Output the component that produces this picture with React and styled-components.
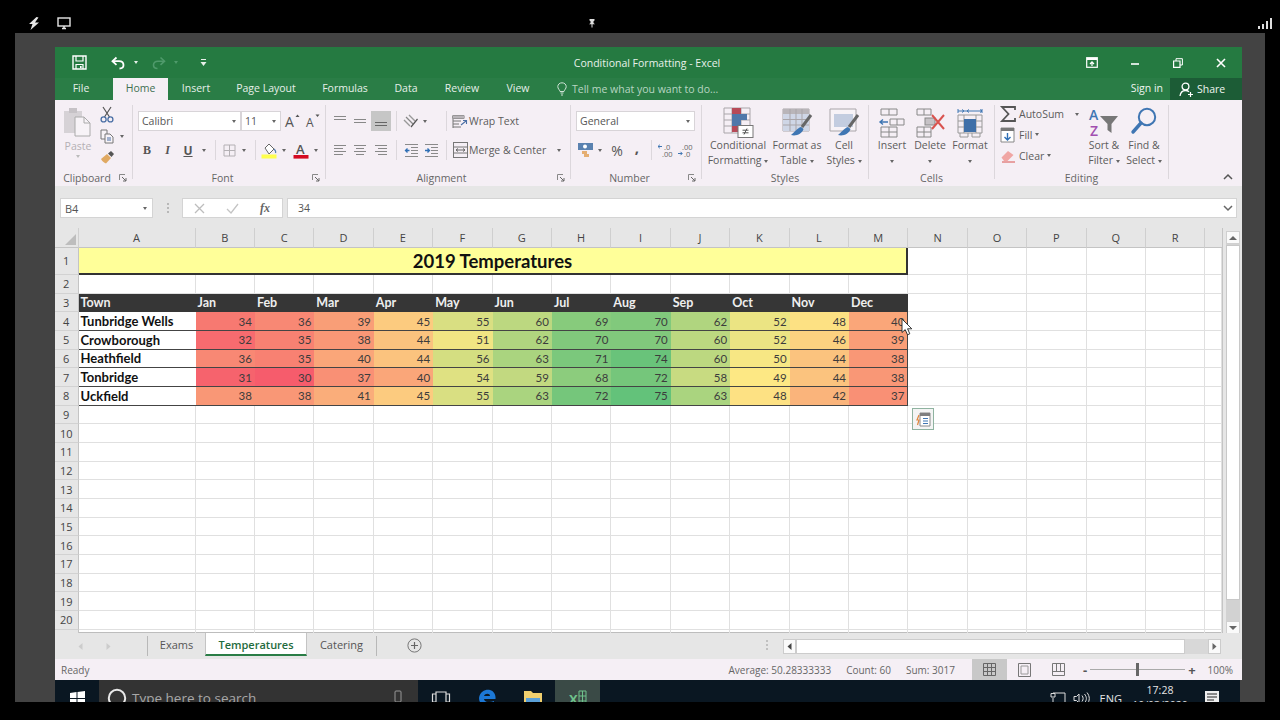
import React from 'react';
import styled, { createGlobalStyle } from 'styled-components';

const GlobalStyle = createGlobalStyle`
  html, body { margin: 0; padding: 0; background: #000; }
  body { font-family: "Open Sans", "Liberation Sans", sans-serif; width: 1280px; height: 720px; overflow: hidden; }
  * { box-sizing: border-box; }
`;

const COLS = 'ABCDEFGHIJKLMNOPQR'.split('');
const MONTHS = ['Jan', 'Feb', 'Mar', 'Apr', 'May', 'Jun', 'Jul', 'Aug', 'Sep', 'Oct', 'Nov', 'Dec'];
const TOWNS = [
  ['Tunbridge Wells', [34, 36, 39, 45, 55, 60, 69, 70, 62, 52, 48, 40]],
  ['Crowborough', [32, 35, 38, 44, 51, 62, 70, 70, 60, 52, 46, 39]],
  ['Heathfield', [36, 35, 40, 44, 56, 63, 71, 74, 60, 50, 44, 38]],
  ['Tonbridge', [31, 30, 37, 40, 54, 59, 68, 72, 58, 49, 44, 38]],
  ['Uckfield', [38, 38, 41, 45, 55, 63, 72, 75, 63, 48, 42, 37]],
];

const mix = (a, b, t) => a.map((v, i) => Math.round(v + (b[i] - v) * t));
const heat = v => {
  const red = [246, 92, 108];
  const yellow = [253, 232, 132];
  const green = [99, 194, 122];
  const c = v < 49 ? mix(red, yellow, (v - 30) / 19) : mix(yellow, green, (v - 49) / 26);
  return `rgb(${c.join(',')})`;
};

const Svg = ({ w, h, children }) => (
  <svg width={w} height={h} viewBox={`0 0 ${w} ${h}`} fill="none" style={{ display: 'block', flex: 'none', overflow: 'visible' }}>
    {children}
  </svg>
);

/* screen chrome */
const BoltIcon = () => <Svg w={12} h={13}><path d="M8.5 0 L1 7 H4.5 L2.5 13 L11 5.5 H7 L10.5 0.5 Z" fill="#e6e6e6" /></Svg>;
const MonitorIcon = () => <Svg w={14} h={13}><rect x="1" y="1" width="12" height="8" stroke="#e6e6e6" strokeWidth="1.4" /><path d="M5 11.5 H9 M7 9 V11.5" stroke="#e6e6e6" strokeWidth="1.6" /></Svg>;
const PinIcon = () => <Svg w={8} h={10}><path d="M1.5 1 H6.5 V2.5 L5.5 3.2 V5 L7 6.2 H1 L2.5 5 V3.2 L1.5 2.5 Z" fill="#ddd" /><path d="M4 6 V9.5" stroke="#ddd" /></Svg>;
const SignalIcon = () => <Svg w={15} h={11}><path d="M1 8 h2 v3 h-2z M5 6 h2 v5 h-2z M9 3 h2 v8 h-2z M13 0 h2 v11 h-2z" fill="#ddd" /></Svg>;

/* title bar */
const SaveIcon = () => <Svg w={15} h={15}><path d="M1 1 H14 V14 H1 Z" stroke="#fff" strokeWidth="1.4" /><path d="M4 1 V6 H11 V1 M4 14 V9.5 H11 V14" stroke="#fff" strokeWidth="1.2" /><rect x="8" y="11" width="1.6" height="2" fill="#fff" /></Svg>;
const UndoIcon = ({ c = '#fff' }) => <Svg w={14} h={14}><path d="M5.5 1.5 L1.5 5.2 L5.5 8.8" stroke={c} strokeWidth="1.8" /><path d="M2 5.2 H8 C11 5.2 12.5 7 12.5 9 C12.5 11 11 12.5 8.5 12.5" stroke={c} strokeWidth="1.8" /></Svg>;
const RedoIcon = () => <Svg w={14} h={14}><path d="M8.5 1.5 L12.5 5.2 L8.5 8.8" stroke="#4f9a6b" strokeWidth="1.6" /><path d="M12 5.2 H6 C3 5.2 1.5 7 1.5 9 C1.5 11 3 12.5 5.5 12.5" stroke="#4f9a6b" strokeWidth="1.6" /></Svg>;
const CustomIcon = () => <Svg w={7} h={9}><path d="M1 1.5 H6" stroke="#e8f0ea" /><path d="M0.5 4 H6.5 L3.5 8 Z" fill="#e8f0ea" /></Svg>;
const DisplayIcon = () => <Svg w={12} h={11}><rect x="0.7" y="0.7" width="10.6" height="9.6" stroke="#fff" strokeWidth="1.2" /><rect x="1" y="1" width="10" height="2" fill="#fff" /><path d="M6 9 V5 M4 7 L6 4.8 L8 7" stroke="#fff" strokeWidth="1.2" /></Svg>;
const MinIcon = () => <Svg w={10} h={10}><path d="M1 6 H9" stroke="#fff" strokeWidth="1.6" /></Svg>;
const RestoreIcon = () => <Svg w={10} h={10}><path d="M0.6 3 H7 V9.4 H0.6 Z" stroke="#fff" strokeWidth="1.2" /><path d="M3 3 V0.7 H9.4 V7 H7" stroke="#fff" /></Svg>;
const CloseIcon = () => <Svg w={10} h={10}><path d="M1 1 L9 9 M9 1 L1 9" stroke="#fff" strokeWidth="1.6" /></Svg>;
const BulbIcon = () => <Svg w={10} h={14}><path d="M3 9.5 C2.5 7.5 0.8 6.8 0.8 4.6 C0.8 2.4 2.6 0.8 5 0.8 C7.4 0.8 9.2 2.4 9.2 4.6 C9.2 6.8 7.5 7.5 7 9.5 Z" stroke="#cfe3d6" /><path d="M3.5 11 H6.5 M4 13 H6" stroke="#cfe3d6" /></Svg>;
const PersonIcon = () => <Svg w={16} h={15}><circle cx="6.5" cy="4.5" r="3.4" stroke="#fff" strokeWidth="1.3" /><path d="M1 14 C1.5 10.5 3.5 8.5 6.5 8.5 C8 8.5 9 9 10 9.8" stroke="#fff" strokeWidth="1.3" /><path d="M11.5 10 V15 M9 12.5 H14" stroke="#fff" strokeWidth="1.2" /></Svg>;

/* clipboard */
const PasteIcon = () => <Svg w={30} h={32}><rect x="1" y="5" width="18" height="22" fill="#d6d2d6" /><rect x="6" y="2" width="8" height="5" fill="#c6c2c6" /><path d="M12 11 H21 L27 17 V30 H12 Z" fill="#f7f3f7" stroke="#aaa" /><path d="M21 11 V17 H27" stroke="#aaa" /></Svg>;
const CutIcon = () => <Svg w={14} h={17}><path d="M3 1 L9.5 11 M11 1 L4.5 11" stroke="#555" strokeWidth="1.2" /><circle cx="3.6" cy="13.4" r="2.5" stroke="#4a6fa5" strokeWidth="1.3" /><circle cx="10.4" cy="13.4" r="2.5" stroke="#4a6fa5" strokeWidth="1.3" /></Svg>;
const CopyIcon = () => <Svg w={14} h={15}><path d="M1 1 H7 V10 H1 Z" stroke="#777" fill="#f7f3f7" /><path d="M5 5 H10 L13 8 V14 H5 Z" stroke="#777" fill="#f7f3f7" /><path d="M7 9 H11 M7 11 H11" stroke="#4a6fa5" /></Svg>;
const BrushIcon = () => <Svg w={15} h={14}><path d="M1 9 L7 4 L11 8 L6 13.5 C4 12.5 2 11 1 9 Z" fill="#e0a962" /><path d="M8 3.5 L11 1 L14 4 L11.5 7 Z" fill="#555" /></Svg>;

/* font */
const FontGrow = ({ small, up }) => (
  <Svg w={16} h={16}>
    <text x={small ? 2 : 1} y="14" fontFamily="Open Sans, sans-serif" fontSize={small ? 12 : 14} fill="#555">A</text>
    <path d={up ? 'M11.5 4 L13.5 1.5 L15.5 4 Z' : 'M11.5 1.5 L13.5 4 L15.5 1.5 Z'} fill="#555" />
  </Svg>
);
const BorderIcon = () => <Svg w={13} h={13}><path d="M1 1 H12 V12 H1 Z M6.5 1 V12 M1 6.5 H12" stroke="#b4b0b4" /></Svg>;
const FillIcon = () => <Svg w={16} h={17}><path d="M4 6 L8 2 L13 7 L8 12 Z" stroke="#666" fill="#fff" /><path d="M13 7 C14.5 8.5 15 10 14.5 11" stroke="#5a82b0" strokeWidth="1.2" /><rect x="0.5" y="12.5" width="15" height="4" fill="#ffff4d" /></Svg>;
const ColorIcon = () => <Svg w={16} h={17}><text x="3" y="12" fontFamily="Open Sans, sans-serif" fontSize="13" fontWeight="600" fill="#555">A</text><rect x="0.5" y="13" width="15" height="3.6" fill="#d40b22" /></Svg>;

/* alignment */
const Lines = ({ rows, stroke = '#888' }) => (
  <Svg w={14} h={14}>
    {rows.map(([x1, y, x2], i) => <path key={i} d={`M${x1} ${y}.5 H${x2}`} stroke={stroke} />)}
  </Svg>
);
const OrientIcon = () => <Svg w={16} h={15}><path d="M3 3 L10 10" stroke="#888" strokeWidth="1.2" /><path d="M6 1 L12 7 M1 6 L7 12" stroke="#999" strokeWidth="1.4" /><path d="M8 13 L14.5 5" stroke="#555" strokeWidth="1.2" /></Svg>;
const IndentIcon = ({ flip }) => (
  <Svg w={15} h={13}>
    <path d="M1 .5 H14 M7 3.5 H14 M7 6.5 H14 M7 9.5 H14 M1 12.5 H14" stroke="#8a8a8a" />
    <path d={flip ? 'M1 6.5 H5 M3.5 4.5 L5.5 6.5 L3.5 8.5' : 'M5.5 6.5 H1.5 M3.5 4.5 L1.5 6.5 L3.5 8.5'} stroke="#2f6fb5" strokeWidth="1.3" />
  </Svg>
);
const WrapIcon = () => <Svg w={17} h={15}><path d="M1 1.5 H12 V4.5 H1 Z M1 7 H9 M1 10 H7 M1 13 H9 M1 1.5 V14" stroke="#777" /><rect x="1" y="1.5" width="11" height="3" fill="#b9b5b9" /><path d="M9 11 L14 7 M11 6.5 H14.5 V10" stroke="#4a6fa5" strokeWidth="1.1" /></Svg>;
const MergeIcon = () => <Svg w={15} h={16}><rect x="0.5" y="0.5" width="14" height="15" stroke="#777" /><path d="M0.5 5 H14.5 M0.5 11 H14.5" stroke="#777" /><path d="M3 8 H12 M3 8 L5 6.5 M3 8 L5 9.5 M12 8 L10 6.5 M12 8 L10 9.5" stroke="#666" /></Svg>;

/* number */
const CurrencyIcon = () => <Svg w={17} h={16}><rect x="1" y="1" width="15" height="7" fill="#5a82b0" /><circle cx="8" cy="4.5" r="2" fill="#fff" /><rect x="5" y="9" width="5" height="3" fill="#e5ae72" /><rect x="7" y="12" width="5" height="3" fill="#e5ae72" /></Svg>;
const DecIcon = ({ more }) => (
  <Svg w={16} h={15}>
    <text x={more ? 5 : 7} y="6.5" fontFamily="Open Sans, sans-serif" fontSize="7.5" fill="#666">{more ? '.00' : '.0'}</text>
    <text x={more ? 7 : 5} y="14" fontFamily="Open Sans, sans-serif" fontSize="7.5" fill="#666">{more ? '.0' : '.00'}</text>
    <path d={more ? 'M1 10.5 H5 M3.5 8.8 L5.2 10.5 L3.5 12.2' : 'M5 3.5 H1 M2.8 1.8 L1 3.5 L2.8 5.2'} stroke="#3f76b3" />
  </Svg>
);

/* styles */
const CondIcon = () => (
  <Svg w={31} h={31}>
    <path d="M1 1 H27 V26 H1 Z M1 7 H27 M1 13 H27 M1 19 H27 M9 1 V26 M18 1 V26" stroke="#a9a5a9" />
    <rect x="9" y="1" width="9" height="6" fill="#b74a58" />
    <rect x="9" y="7" width="15" height="6" fill="#4f78aa" />
    <rect x="9" y="13" width="9" height="6" fill="#4f78aa" />
    <rect x="9" y="19" width="6" height="6" fill="#b74a58" />
    <rect x="15" y="18.5" width="15" height="12" fill="#fff" stroke="#777" />
    <path d="M19.5 23.2 H25.5 M19.5 25.8 H25.5 M24 21.5 L21 27.5" stroke="#555" />
  </Svg>
);
const TableIcon = ({ cell }) => (
  <Svg w={32} h={31}>
    <path d="M2 2 H28 V24 H2 Z" stroke="#a9a5a9" fill={cell ? '#f7f3f7' : '#fff'} />
    {cell ? <rect x="6" y="7" width="19" height="13" fill="#c3cde0" /> : (
      <>
        <rect x="2" y="2" width="26" height="5" fill="#b9b5b9" />
        <rect x="2" y="7" width="26" height="17" fill="#cfd6e6" />
        <path d="M2 12.5 H28 M2 18 H28 M9 2 V24 M15 2 V24 M21 2 V24" stroke="#a9a5a9" />
      </>
    )}
    <path d="M30 8 L21 20" stroke="#666" strokeWidth="3" />
    <path d="M20 20 C16 21 13 26 10 28 C15 29.5 21 27 22.5 22 Z" fill="#3f76b3" />
  </Svg>
);

/* cells */
const InsertIcon = () => (
  <Svg w={28} h={30}>
    <path d="M3 2 H19 V8 H3 Z M11 2 V8 M3 20 H19 V30 H3 Z M11 20 V30 M3 25 H19" stroke="#888" />
    <path d="M12 12 H26 V18 H12 Z M19 12 V18" stroke="#888" />
    <path d="M10 15 H2 M5 12.5 L2 15 L5 17.5" stroke="#3f76b3" strokeWidth="1.4" />
  </Svg>
);
const DeleteIcon = () => (
  <Svg w={30} h={30}>
    <path d="M2 2 H16 V8 H2 Z M9 2 V8 M2 20 H16 V30 H2 Z M9 20 V30 M2 25 H16" stroke="#888" />
    <rect x="10" y="11" width="10" height="7" fill="#c6c2c6" stroke="#888" />
    <path d="M17 8 L29 22 M29 8 L17 22" stroke="#d9534f" strokeWidth="2" />
  </Svg>
);
const FormatIcon = () => (
  <Svg w={28} h={32}>
    <path d="M2 4 H8 M2 2 V6 M8 4 L6 2.5 M8 4 L6 5.5" stroke="#3f76b3" />
    <path d="M8 4 H26 M26 2 V6 M11 4 L13 2.5 M11 4 L13 5.5 M26 4 L24 2.5 M26 4 L24 5.5" stroke="#3f76b3" />
    <path d="M2 8 H26 V26 H2 Z M8 8 V26 M20 8 V26 M2 14 H26 M2 20 H26" stroke="#999" />
    <rect x="8" y="12" width="12" height="13" fill="#3f6fa8" />
    <path d="M4 26 V30 H12 V26 M16 26 V30 H24 V26" stroke="#999" />
  </Svg>
);

/* editing */
const SigmaIcon = () => <Svg w={16} h={16}><path d="M15 4 V1 H2 L8.5 8 L2 15 H15 V12" stroke="#555" strokeWidth="1.8" /></Svg>;
const FillDown = () => <Svg w={16} h={16}><path d="M1 1 H14 V15 H1 Z" stroke="#888" fill="#fff" /><rect x="1" y="1" width="13" height="3" fill="#777" /><path d="M7.5 6 V13 M4.5 10 L7.5 13 L10.5 10" stroke="#2f6fb5" strokeWidth="1.4" /></Svg>;
const EraserIcon = () => <Svg w={16} h={14}><path d="M1.5 8.5 L8 2 L13.5 6 L7.5 12 H4 Z" fill="#f0a6a4" /><path d="M2 13 H15" stroke="#d9534f" /></Svg>;
const SortIcon = () => (
  <Svg w={30} h={32}>
    <text x="0" y="13" fontFamily="Open Sans, sans-serif" fontSize="14" fontWeight="600" fill="#3f76b3">A</text>
    <text x="1" y="29" fontFamily="Open Sans, sans-serif" fontSize="14" fontWeight="600" fill="#a24fb0">Z</text>
    <path d="M11 9 H29 L22.5 17 V26 L18.5 23 V17 Z" fill="#777" />
  </Svg>
);
const FindIcon = () => <Svg w={28} h={30}><circle cx="17" cy="10" r="8.2" stroke="#3f76b3" strokeWidth="2" /><path d="M11 16 L3 25" stroke="#3f76b3" strokeWidth="3.4" strokeLinecap="round" /></Svg>;
const ChevUp = () => <Svg w={10} h={6}><path d="M1 5 L5 1 L9 5" stroke="#555" strokeWidth="1.5" /></Svg>;
const ChevDown = () => <Svg w={10} h={6}><path d="M1 1 L5 5 L9 1" stroke="#666" strokeWidth="1.5" /></Svg>;
const Launcher = () => <Svg w={8} h={8}><path d="M.5 6 V.5 H6" stroke="#888" /><path d="M3 3 L7 7 M7 4 V7 H4" stroke="#666" /></Svg>;

/* formula bar */
const CrossIcon = () => <Svg w={11} h={11}><path d="M1 1 L10 10 M10 1 L1 10" stroke="#bdbdbd" strokeWidth="1.3" /></Svg>;
const CheckIcon = () => <Svg w={13} h={11}><path d="M1 6 L5 10 L12 1" stroke="#c4c4c4" strokeWidth="1.3" /></Svg>;

/* sheet overlays */
const CursorIcon = () => <Svg w={12} h={18}><path d="M1 1 V14.5 L4.2 11.6 L6.5 16.8 L8.8 15.8 L6.6 10.8 H10.8 Z" fill="#fff" stroke="#222" strokeWidth="0.9" /></Svg>;
const QuickIcon = () => <Svg w={15} h={15}><path d="M4 1 H14 V14 H4 Z" stroke="#8a8a8a" fill="#fff" /><path d="M4 1 H14 V4 H4 Z" fill="#7f7f7f" /><path d="M7 6.5 H12 M7 9 H12 M7 11.5 H12" stroke="#3f76b3" /><path d="M3 3 L1 8 H3 L1.5 13" stroke="#e0863e" strokeWidth="1.2" /></Svg>;

/* tab bar + status */
const PlusCircle = () => <Svg w={15} h={15}><circle cx="7.5" cy="7.5" r="6.6" stroke="#777" /><path d="M7.5 4 V11 M4 7.5 H11" stroke="#666" strokeWidth="1.2" /></Svg>;
const Tri = ({ dir, c = '#666' }) => <Svg w={5} h={7}><path d={dir === 'l' ? 'M4.5 0 V7 L0.5 3.5 Z' : 'M.5 0 V7 L4.5 3.5 Z'} fill={c} /></Svg>;
const GridView = () => <Svg w={13} h={13}><path d="M.5 .5 H12.5 V12.5 H.5 Z M4.5 .5 V12.5 M8.5 .5 V12.5 M.5 4.5 H12.5 M.5 8.5 H12.5" stroke="#666" /></Svg>;
const PageView = () => <Svg w={13} h={14}><path d="M.5 .5 H12.5 V13.5 H.5 Z" stroke="#777" /><path d="M3 3 H10 V11 H3 Z" stroke="#9a9a9a" /></Svg>;
const BreakView = () => <Svg w={13} h={13}><path d="M.5 .5 H12.5 V12.5 H.5 Z M.5 8.5 H12.5 M4.5 .5 V8.5 M8.5 .5 V8.5" stroke="#777" /></Svg>;

/* taskbar */
const WinIcon = () => <Svg w={15} h={15}><path d="M0 2 L6.5 1 V7 H0 Z M7.5 .9 L15 0 V7 H7.5 Z M0 8 H6.5 V14 L0 13 Z M7.5 8 H15 V15 L7.5 14 Z" fill="#fff" /></Svg>;
const CortanaIcon = () => <Svg w={20} h={20}><circle cx="10" cy="10" r="8.2" stroke="#e8e8e8" strokeWidth="2" /></Svg>;
const MicIcon = () => <Svg w={9} h={17}><rect x="1" y="1" width="6" height="11" rx="1" stroke="#999" /><path d="M0 14 H8" stroke="#999" /></Svg>;
const TaskViewIcon = () => <Svg w={20} h={16}><path d="M5 2 H15 V14 H5 Z M5 4 H1.5 V12 H5 M15 4 H18.5 V12 H15" stroke="#ddd" strokeWidth="1.2" /></Svg>;
const EdgeIcon = () => <Svg w={20} h={20}><path d="M2 10 C3 3 9 1 13 2 C17 3 19 7 18.5 11 H7 C7.5 14 11 15 17 13 V17 C11 20 2 18 2 10 Z M7 8 H13 C13 5 8 5 7 8 Z" fill="#1c78d6" fillRule="evenodd" /></Svg>;
const FolderIcon = () => <Svg w={20} h={17}><path d="M1 1 H8 L10 3 H19 V16 H1 Z" fill="#f0cf6e" /><rect x="3" y="8" width="14" height="4" fill="#5aa0d8" /></Svg>;
const ExcelIcon = () => <Svg w={20} h={19}><text x="1" y="15" fontFamily="Open Sans, sans-serif" fontSize="13" fontWeight="700" fill="#6fc28c">X</text><path d="M11 2 H18 V17 H11 Z M11 7 H18 M11 12 H18 M14.5 2 V17" stroke="#6fc28c" /></Svg>;
const BatteryIcon = () => <Svg w={16} h={13}><path d="M3 1 H15 V12 H3 V6 M1 1.5 H5 V5 H1 Z" stroke="#ddd" /></Svg>;
const SpeakerIcon = () => <Svg w={17} h={13}><path d="M1 4.5 H3.5 L6 2 V11 L3.5 8.5 H1 Z" stroke="#ddd" /><path d="M9 3.5 C10.5 5.5 10.5 7.5 9 9.5 M11.5 2 C14 5 14 8 11.5 11 M14 .5 C17 4.5 17 8.5 14 12.5" stroke="#ddd" /></Svg>;
const NotifyIcon = () => <Svg w={16} h={16}><path d="M1 1 H15 V12 H8 L5 15 V12 H1 Z" fill="#eee" /><path d="M3 4 H13 M3 7 H13 M3 10 H10" stroke="#222" /></Svg>;

const App = () => (
  <>
    <GlobalStyle />
    <TopStrip>
      <TopIcon $left={28}><BoltIcon /></TopIcon>
      <TopIcon $left={17}><MonitorIcon /></TopIcon>
      <TopIcon $left={517}><PinIcon /></TopIcon>
      <TopIcon $left={0} $push><SignalIcon /></TopIcon>
    </TopStrip>
    <Stage>
      <Window>
        <TitleBar>
          <Qat>
            <QatBtn $w={48}><SaveIcon /></QatBtn>
            <QatBtn $w={30}><UndoIcon /></QatBtn>
            <QatBtn $w={6}><Caret $c="#e8f0ea" /></QatBtn>
            <QatBtn $w={30} $ml={5}><RedoIcon /></QatBtn>
            <QatBtn $w={4}><Caret $c="#4f9a6b" /></QatBtn>
            <QatBtn $w={50}><CustomIcon /></QatBtn>
          </Qat>
          <TitleText>Conditional Formatting - Excel</TitleText>
          <WinBtns>
            <WinBtn><DisplayIcon /></WinBtn>
            <WinBtn><MinIcon /></WinBtn>
            <WinBtn><RestoreIcon /></WinBtn>
            <WinBtn><CloseIcon /></WinBtn>
          </WinBtns>
        </TitleBar>

        <TabRow>
          <MenuTab $w={52}>File</MenuTab>
          <MenuTab $w={6} />
          <MenuTab $w={55} $active>Home</MenuTab>
          <MenuTab $w={56}>Insert</MenuTab>
          <MenuTab $w={84}>Page Layout</MenuTab>
          <MenuTab $w={74}>Formulas</MenuTab>
          <MenuTab $w={48}>Data</MenuTab>
          <MenuTab $w={64}>Review</MenuTab>
          <MenuTab $w={48}>View</MenuTab>
          <TellMe><BulbIcon />Tell me what you want to do...</TellMe>
          <SignIn>Sign in</SignIn>
          <ShareBox><PersonIcon />Share</ShareBox>
        </TabRow>

        <Ribbon>
          <Group $w={77}>
            <ClipBody>
              <PasteCol>
                <PasteIcon />
                <Faint>Paste</Faint>
                <Caret $c="#bbb" />
              </PasteCol>
              <ClipCol>
                <CutIcon />
                <ClipRow><CopyIcon /><Caret /></ClipRow>
                <BrushIcon />
              </ClipCol>
            </ClipBody>
            <GroupFoot><span>Clipboard</span><Launcher /></GroupFoot>
          </Group>
          <GroupSep />

          <Group $w={192}>
            <Rows $left={4}>
              <Row>
                <Combo $w={103} $ml={1}>Calibri<Caret /></Combo>
                <Combo $w={40}>11<Caret /></Combo>
                <Btn $w={20} $ml={1}><FontGrow up /></Btn>
                <Btn $w={20}><FontGrow small /></Btn>
              </Row>
              <Row>
                <Btn $w={20}><BoldMark>B</BoldMark></Btn>
                <Btn $w={21}><ItalicMark>I</ItalicMark></Btn>
                <Btn $w={20}><UnderMark>U</UnderMark></Btn>
                <Btn $w={12}><Caret /></Btn>
                <RowSep $ml={5} />
                <Btn $w={18}><BorderIcon /></Btn>
                <Btn $w={12}><Caret /></Btn>
                <RowSep $ml={5} />
                <Btn $w={18}><FillIcon /></Btn>
                <Btn $w={12}><Caret /></Btn>
                <Btn $w={19} $ml={1}><ColorIcon /></Btn>
                <Btn $w={12}><Caret /></Btn>
              </Row>
            </Rows>
            <GroupFoot><span>Font</span><Launcher /></GroupFoot>
          </Group>
          <GroupSep />

          <Group $w={244}>
            <Rows $left={4}>
              <Row>
                <Btn $w={20}><Lines rows={[[1, 2, 13], [1, 5, 13]]} /></Btn>
                <Btn $w={20}><Lines rows={[[1, 5, 13], [1, 8, 13]]} /></Btn>
                <Btn $w={20} $ml={1} $on><Lines rows={[[1, 8, 13], [1, 11, 13]]} stroke="#666" /></Btn>
                <RowSep $ml={5} />
                <Btn $w={20}><OrientIcon /></Btn>
                <Btn $w={8}><Caret /></Btn>
                <RowSep $ml={17} />
                <Btn $w={18}><WrapIcon /></Btn>
                <RibbonText>Wrap Text</RibbonText>
              </Row>
              <Row>
                <Btn $w={20}><Lines rows={[[1, 2, 13], [1, 5, 10], [1, 8, 13], [1, 11, 10]]} /></Btn>
                <Btn $w={20}><Lines rows={[[1, 2, 13], [3, 5, 11], [1, 8, 13], [3, 11, 11]]} /></Btn>
                <Btn $w={20} $ml={1}><Lines rows={[[1, 2, 13], [4, 5, 13], [1, 8, 13], [4, 11, 13]]} /></Btn>
                <RowSep $ml={5} />
                <Btn $w={20}><IndentIcon /></Btn>
                <Btn $w={20}><IndentIcon flip /></Btn>
                <RowSep $ml={5} />
                <Btn $w={18}><MergeIcon /></Btn>
                <RibbonText>Merge &amp; Center</RibbonText>
                <Btn $w={25}><Caret /></Btn>
              </Row>
            </Rows>
            <GroupFoot><span>Alignment</span><Launcher /></GroupFoot>
          </Group>
          <GroupSep />

          <Group $w={130}>
            <Rows $left={5}>
              <Row>
                <Combo $w={119}>General<Caret /></Combo>
              </Row>
              <Row>
                <Btn $w={18}><CurrencyIcon /></Btn>
                <Btn $w={12}><Caret /></Btn>
                <Btn $w={22}><PercentMark>%</PercentMark></Btn>
                <Btn $w={18}><CommaMark>,</CommaMark></Btn>
                <RowSep $ml={5} />
                <Btn $w={20} $ml={-1}><DecIcon /></Btn>
                <Btn $w={20}><DecIcon more /></Btn>
              </Row>
            </Rows>
            <GroupFoot><span>Number</span><Launcher /></GroupFoot>
          </Group>
          <GroupSep />

          <Group $w={166}>
            <BigRow $left={4}>
              <BigBtn $w={64}><BigIcon><CondIcon /></BigIcon><span>Conditional</span><span>Formatting <Caret /></span></BigBtn>
              <BigBtn $w={54}><BigIcon><TableIcon /></BigIcon><span>Format as</span><span>Table <Caret /></span></BigBtn>
              <BigBtn $w={40}><BigIcon><TableIcon cell /></BigIcon><span>Cell</span><span>Styles <Caret /></span></BigBtn>
            </BigRow>
            <GroupFoot $plain><span>Styles</span></GroupFoot>
          </Group>
          <GroupSep />

          <Group $w={125}>
            <BigRow $left={4}>
              <BigBtn $w={38}><BigIcon><InsertIcon /></BigIcon><span>Insert</span><span><Caret /></span></BigBtn>
              <BigBtn $w={38}><BigIcon><DeleteIcon /></BigIcon><span>Delete</span><span><Caret /></span></BigBtn>
              <BigBtn $w={42}><BigIcon><FormatIcon /></BigIcon><span>Format</span><span><Caret /></span></BigBtn>
            </BigRow>
            <GroupFoot $plain><span>Cells</span></GroupFoot>
          </Group>
          <GroupSep />

          <Group $w={173}>
            <BigRow $left={5}>
              <EditCol>
                <EditRow><SigmaIcon /><RibbonText>AutoSum</RibbonText><CaretSlot><Caret /></CaretSlot></EditRow>
                <EditRow><FillDown /><RibbonText>Fill</RibbonText><Caret /></EditRow>
                <EditRow><EraserIcon /><RibbonText>Clear</RibbonText><Caret /></EditRow>
              </EditCol>
              <BigBtn $w={40}><BigIcon><SortIcon /></BigIcon><span>Sort &amp;</span><span>Filter <Caret /></span></BigBtn>
              <BigBtn $w={40}><BigIcon><FindIcon /></BigIcon><span>Find &amp;</span><span>Select <Caret /></span></BigBtn>
            </BigRow>
            <GroupFoot $plain><span>Editing</span></GroupFoot>
          </Group>
          <GroupSep />
          <CollapseSlot><ChevUp /></CollapseSlot>
        </Ribbon>

        <FormulaBar>
          <NameBox>B4<Caret /></NameBox>
          <BarDots />
          <FxBox>
            <CrossIcon />
            <CheckIcon />
            <FxMark>fx</FxMark>
          </FxBox>
          <FormulaInput>34<ChevSlot><ChevDown /></ChevSlot></FormulaInput>
        </FormulaBar>

        <SheetArea>
          <GridWrap>
            <Grid>
              <Corner><CornerMark /></Corner>
              {COLS.map(c => <ColHead key={c}>{c}</ColHead>)}
              <ColHead $last />

              <RowHead>1</RowHead>
              <TitleCell>2019 Temperatures</TitleCell>
              {COLS.slice(13).map(c => <Cell key={c} />)}
              <Cell />

              <RowHead>2</RowHead>
              {COLS.map(c => <Cell key={c} />)}
              <Cell />

              <RowHead>3</RowHead>
              <DarkCell>Town</DarkCell>
              {MONTHS.map(m => <DarkCell key={m}>{m}</DarkCell>)}
              {COLS.slice(13).map(c => <Cell key={c} />)}
              <Cell />

              {TOWNS.map(([town, temps], r) => (
                <React.Fragment key={town}>
                  <RowHead>{r + 4}</RowHead>
                  <TownCell>{town}</TownCell>
                  {temps.map((t, i) => (
                    <HeatCell key={i} $end={i === 11} style={{ background: heat(t) }}>{t}</HeatCell>
                  ))}
                  {COLS.slice(13).map(c => <Cell key={c} />)}
                  <Cell />
                </React.Fragment>
              ))}

              {Array.from({ length: 13 }, (_, i) => i + 9).map(n => (
                <React.Fragment key={n}>
                  <RowHead>{n < 21 ? n : ''}</RowHead>
                  {COLS.map(c => <Cell key={c} />)}
                  <Cell />
                </React.Fragment>
              ))}
            </Grid>
            <QuickButton><QuickIcon /></QuickButton>
            <Pointer><CursorIcon /></Pointer>
          </GridWrap>
          <VScroll>
            <ScrollBtn><UpTri /></ScrollBtn>
            <VThumb />
            <ScrollBtn><DownTri /></ScrollBtn>
          </VScroll>
        </SheetArea>

        <SheetTabs>
          <TabNav><Tri dir="l" c="#ccc" /><Tri dir="r" c="#ccc" /></TabNav>
          <TabSep $ml={36} />
          <SheetTab $w={57}>Exams</SheetTab>
          <SheetTab $w={102} $active>Temperatures</SheetTab>
          <SheetTab $w={69}>Catering</SheetTab>
          <TabSep $ml={0} />
          <AddSheet><PlusCircle /></AddSheet>
          <SplitDots />
          <HScroll>
            <HBtn><Tri dir="l" c="#444" /></HBtn>
            <HThumb />
            <HGap />
            <HBtn><Tri dir="r" c="#666" /></HBtn>
          </HScroll>
        </SheetTabs>

        <StatusBar>
          <span>Ready</span>
          <StatusInfo>
            <span>Average: 50.28333333</span>
            <span>Count: 60</span>
            <span>Sum: 3017</span>
          </StatusInfo>
          <ViewBtn $w={35} $on><GridView /></ViewBtn>
          <ViewBtn $w={35}><PageView /></ViewBtn>
          <ViewBtn $w={34}><BreakView /></ViewBtn>
          <ZoomBox>
            <ZoomMark>-</ZoomMark>
            <ZoomTrack><ZoomThumb /></ZoomTrack>
            <ZoomMark>+</ZoomMark>
          </ZoomBox>
          <ZoomPct>100%</ZoomPct>
        </StatusBar>

        <Taskbar>
          <StartBtn><WinIcon /></StartBtn>
          <SearchBox><CortanaIcon /><SearchText>Type here to search</SearchText><MicSlot><MicIcon /></MicSlot></SearchBox>
          <TaskBtn $w={45}><TaskViewIcon /></TaskBtn>
          <TaskBtn $w={47}><EdgeIcon /></TaskBtn>
          <TaskBtn $w={45}><FolderIcon /></TaskBtn>
          <TaskBtn $w={45} $on><ExcelIcon /></TaskBtn>
          <Tray>
            <BatteryIcon />
            <SpeakerIcon />
            <TrayLang>ENG</TrayLang>
            <Clock><span>17:28</span><span>10/03/2020</span></Clock>
            <NotifyIcon />
          </Tray>
        </Taskbar>
      </Window>
    </Stage>
  </>
);

export default App;

const TopStrip = styled.div`
  display: flex;
  align-items: center;
  height: 33px;
  padding: 13px 8px 0 0;
  background: #000;
`;

const TopIcon = styled.div`
  margin-left: ${p => (p.$push ? 'auto' : `${p.$left}px`)};
`;

const Stage = styled.div`
  width: 1250px;
  height: 669px;
  margin-left: 15px;
  padding: 14px 23px 0 40px;
  background: #434343;
  overflow: hidden;
`;

const Window = styled.div`
  width: 1187px;
  display: flex;
  flex-direction: column;
`;

const TitleBar = styled.div`
  display: grid;
  grid-template-columns: 1fr auto 1fr;
  align-items: center;
  height: 31px;
  background: #257a41;
`;

const Qat = styled.div`
  display: flex;
  align-items: center;
`;

const QatBtn = styled.div`
  display: flex;
  justify-content: center;
  width: ${p => p.$w}px;
  margin-left: ${p => p.$ml || 0}px;
`;

const TitleText = styled.div`
  color: #e8f1eb;
  font-size: 10.5px;
  padding-right: 3px;
`;

const WinBtns = styled.div`
  display: flex;
  justify-content: flex-end;
`;

const WinBtn = styled.div`
  display: flex;
  justify-content: center;
  align-items: center;
  width: 43px;
  height: 28px;
`;

const TabRow = styled.div`
  display: flex;
  height: 22px;
  background: #2a7d46;
`;

const MenuTab = styled.div`
  width: ${p => p.$w}px;
  text-align: center;
  line-height: 21px;
  font-size: 10.5px;
  color: ${p => (p.$active ? '#3f6f52' : '#e6efe9')};
  background: ${p => (p.$active ? '#f5eff5' : 'transparent')};
`;

const TellMe = styled.div`
  display: flex;
  align-items: center;
  gap: 5px;
  margin-left: 15px;
  font-size: 10.5px;
  color: #b8d5c2;
`;

const SignIn = styled.div`
  margin-left: auto;
  line-height: 21px;
  font-size: 10.5px;
  color: #eef5f0;
  padding-right: 7px;
`;

const ShareBox = styled.div`
  display: flex;
  align-items: center;
  gap: 2px;
  width: 72px;
  padding-left: 9px;
  font-size: 10.5px;
  color: #eef5f0;
  background: #1c5c36;
`;

const Ribbon = styled.div`
  display: flex;
  height: 86px;
  background: #f5eff5;
  color: #5c5c5c;
  font-size: 10.5px;
`;

const Group = styled.div`
  display: flex;
  flex-direction: column;
  flex: none;
  width: ${p => p.$w}px;
`;

const GroupSep = styled.div`
  flex: none;
  width: 1px;
  margin: 5px 0 7px;
  background: #dcd7dc;
`;

const GroupFoot = styled.div`
  display: flex;
  align-items: center;
  height: 16px;
  padding-right: 3px;
  color: #666;
  font-size: 10.5px;
  span {
    flex: 1;
    text-align: center;
    padding-left: ${p => (p.$plain ? '3px' : '0')};
  }
  svg { margin-right: 2px; }
`;

const ClipBody = styled.div`
  display: flex;
  flex: 1;
  height: 70px;
  padding: 6px 0 0 8px;
`;

const PasteCol = styled.div`
  display: flex;
  flex-direction: column;
  align-items: center;
  width: 30px;
  gap: 1px;
`;

const Faint = styled.span`
  color: #b4b0b4;
  line-height: 15px;
`;

const ClipCol = styled.div`
  display: flex;
  flex-direction: column;
  gap: 6px;
  padding: 0 0 0 7px;
`;

const ClipRow = styled.div`
  display: flex;
  align-items: center;
  gap: 6px;
`;

const Rows = styled.div`
  display: flex;
  flex-direction: column;
  gap: 9px;
  height: 70px;
  padding: 11px 0 0 ${p => p.$left}px;
`;

const Row = styled.div`
  display: flex;
  align-items: center;
  height: 20px;
`;

const Btn = styled.div`
  display: flex;
  align-items: center;
  justify-content: center;
  flex: none;
  width: ${p => p.$w}px;
  height: 20px;
  margin-left: ${p => p.$ml || 0}px;
  background: ${p => (p.$on ? '#c6c6c6' : 'transparent')};
`;

const RowSep = styled.div`
  flex: none;
  width: 1px;
  height: 20px;
  margin: 0 4px 0 ${p => p.$ml || 0}px;
  background: #dcd7dc;
`;

const Combo = styled.div`
  display: flex;
  align-items: center;
  justify-content: space-between;
  flex: none;
  width: ${p => p.$w}px;
  height: 20px;
  margin-left: ${p => p.$ml || 0}px;
  padding: 0 4px 0 3px;
  background: #fff;
  border: 1px solid #d8d4d8;
  color: #555;
  font-size: 10.5px;
`;

const Caret = styled.i`
  display: inline-block;
  width: 0;
  height: 0;
  vertical-align: middle;
  border-left: 2.5px solid transparent;
  border-right: 2.5px solid transparent;
  border-top: 3px solid ${p => p.$c || '#666'};
`;

const BoldMark = styled.span`
  font: 700 12px "Liberation Serif", serif;
  color: #555;
`;

const ItalicMark = styled.span`
  font: italic 700 12px "Liberation Serif", serif;
  color: #555;
`;

const UnderMark = styled.span`
  font: 700 12px "Open Sans", sans-serif;
  color: #555;
  text-decoration: underline;
`;

const PercentMark = styled.span`
  font-size: 14px;
  color: #555;
`;

const CommaMark = styled.span`
  font-size: 15px;
  font-weight: 700;
  line-height: 15px;
  margin-top: -6px;
  color: #555;
`;

const RibbonText = styled.span`
  white-space: nowrap;
`;

const BigRow = styled.div`
  display: flex;
  height: 70px;
  padding-left: ${p => p.$left}px;
`;

const BigBtn = styled.div`
  display: flex;
  flex-direction: column;
  align-items: center;
  flex: none;
  width: ${p => p.$w}px;
  padding-top: 7px;
  span {
    line-height: 15px;
    white-space: nowrap;
  }
`;

const BigIcon = styled.div`
  display: flex;
  justify-content: center;
  align-items: flex-start;
  height: 31px;
`;

const EditCol = styled.div`
  display: flex;
  flex-direction: column;
  width: 84px;
  padding-top: 3px;
`;

const EditRow = styled.div`
  display: flex;
  align-items: center;
  gap: 3px;
  height: 21px;
`;

const CaretSlot = styled.span`
  margin-left: 8px;
`;

const CollapseSlot = styled.div`
  display: flex;
  flex: 1;
  justify-content: flex-end;
  align-items: flex-end;
  padding: 0 9px 6px 0;
`;

const FormulaBar = styled.div`
  display: flex;
  align-items: flex-start;
  height: 42px;
  padding: 12px 5px 0;
  background: #e6e6e6;
  color: #555;
  font-size: 11px;
`;

const NameBox = styled.div`
  display: flex;
  align-items: center;
  justify-content: space-between;
  width: 93px;
  height: 20px;
  padding: 0 5px 0 4px;
  background: #fff;
  border: 1px solid #d4d4d4;
`;

const BarDots = styled.div`
  width: 2px;
  height: 10px;
  margin: 5px 13px 0 14px;
  background: repeating-linear-gradient(#b8b8b8 0 2px, transparent 2px 4px);
`;

const FxBox = styled.div`
  display: flex;
  align-items: center;
  justify-content: space-between;
  width: 101px;
  height: 20px;
  padding: 0 12px 0 11px;
  background: #fff;
  border: 1px solid #d4d4d4;
`;

const FxMark = styled.span`
  font: italic 700 12px "Liberation Serif", serif;
  color: #666;
`;

const FormulaInput = styled.div`
  display: flex;
  align-items: center;
  flex: 1;
  height: 20px;
  margin-left: 4px;
  padding-left: 10px;
  background: #fff;
  border: 1px solid #d4d4d4;
  font-size: 10.5px;
`;

const ChevSlot = styled.span`
  margin-left: auto;
  padding-right: 3px;
`;

const SheetArea = styled.div`
  display: flex;
  height: 405px;
  background: #e6e6e6;
`;

const GridWrap = styled.div`
  position: relative;
  width: 1168px;
  height: 405px;
  overflow: hidden;
`;

const Grid = styled.div`
  display: grid;
  grid-template-columns: 23.5px 117px repeat(17, 59.42px) 1fr;
  grid-template-rows: 19.5px 27.5px 18.7px repeat(18, 18.66px) 20px;
  height: 405px;
  background: #fff;
  border-right: 1px solid #c4c4c4;
  border-bottom: 1px solid #bdbdbd;
  font-family: "Lato", "Liberation Sans", sans-serif;
`;

const Corner = styled.div`
  display: flex;
  align-items: flex-end;
  justify-content: flex-end;
  padding: 0 2px 2px 0;
  background: #e6e6e6;
  border-right: 1px solid #cfcfcf;
  border-bottom: 1px solid #c4c4c4;
`;

const CornerMark = styled.div`
  width: 0;
  height: 0;
  border-left: 11px solid transparent;
  border-bottom: 11px solid #bdbdbd;
`;

const ColHead = styled.div`
  display: flex;
  align-items: center;
  justify-content: center;
  background: #e6e6e6;
  border-right: ${p => (p.$last ? '0' : '1px solid #cfcfcf')};
  border-bottom: 1px solid #c4c4c4;
  font: 11px "Open Sans", sans-serif;
  color: #444;
`;

const RowHead = styled.div`
  display: flex;
  align-items: center;
  justify-content: center;
  background: #e6e6e6;
  border-right: 1px solid #c4c4c4;
  border-bottom: 1px solid #d2d2d2;
  font: 11px "Open Sans", sans-serif;
  color: #444;
`;

const Cell = styled.div`
  border-right: 1px solid #e0e0e0;
  border-bottom: 1px solid #e0e0e0;
`;

const TitleCell = styled.div`
  grid-column: span 13;
  display: flex;
  align-items: center;
  justify-content: center;
  padding-top: 2px;
  background: #ffff99;
  border-right: 2px solid #333;
  border-bottom: 2px solid #333;
  font-size: 18.5px;
  font-weight: 700;
  color: #111;
`;

const DarkCell = styled.div`
  display: flex;
  align-items: center;
  padding-left: 2px;
  padding-bottom: 1px;
  background: #363636;
  color: #eee;
  font-size: 12.5px;
  font-weight: 700;
`;

const TownCell = styled.div`
  display: flex;
  align-items: center;
  padding-left: 2px;
  border-bottom: 1px solid #444;
  font-size: 13px;
  font-weight: 700;
  color: #111;
  white-space: nowrap;
`;

const HeatCell = styled.div`
  display: flex;
  align-items: center;
  justify-content: flex-end;
  padding-right: 3px;
  border-bottom: 1px solid #444;
  border-right: ${p => (p.$end ? '1px solid #444' : '0')};
  font-size: 11.5px;
  color: #3c3c3c;
`;

const QuickButton = styled.div`
  position: absolute;
  left: 857px;
  top: 180px;
  display: flex;
  align-items: center;
  justify-content: center;
  width: 22px;
  height: 22px;
  background: #f4f4f4;
  border: 1px solid #8fb3a0;
`;

const Pointer = styled.div`
  position: absolute;
  left: 846px;
  top: 90px;
`;

const VScroll = styled.div`
  display: flex;
  flex-direction: column;
  width: 14px;
  height: 403px;
  margin: 3px 0 0 3px;
  background: #d2d2d2;
`;

const ScrollBtn = styled.div`
  display: flex;
  align-items: center;
  justify-content: center;
  flex: none;
  height: 13px;
  background: #fafafa;
  border: 1px solid #d0d0d0;
  &:last-child { margin-top: auto; }
`;

const UpTri = styled.i`
  width: 0;
  height: 0;
  border-left: 4px solid transparent;
  border-right: 4px solid transparent;
  border-bottom: 4px solid #666;
`;

const DownTri = styled.i`
  width: 0;
  height: 0;
  border-left: 4px solid transparent;
  border-right: 4px solid transparent;
  border-top: 4px solid #666;
`;

const VThumb = styled.div`
  height: 355px;
  margin-top: 1px;
  background: #fff;
  border: 1px solid #c8c8c8;
`;

const SheetTabs = styled.div`
  display: flex;
  align-items: flex-start;
  height: 26px;
  background: #e6e6e6;
  font-size: 11px;
  color: #555;
`;

const TabNav = styled.div`
  display: flex;
  align-items: center;
  justify-content: space-between;
  width: 33px;
  height: 20px;
  margin: 3px 0 0 23px;
`;

const TabSep = styled.div`
  width: 1px;
  height: 20px;
  margin: 3px 0 0 ${p => p.$ml}px;
  background: #b8b8b8;
`;

const SheetTab = styled.div`
  width: ${p => p.$w}px;
  height: ${p => (p.$active ? 23 : 26)}px;
  line-height: 23px;
  text-align: center;
  background: ${p => (p.$active ? '#fff' : 'transparent')};
  color: ${p => (p.$active ? '#1f6b3d' : '#555')};
  font-weight: ${p => (p.$active ? 600 : 400)};
  border-bottom: ${p => (p.$active ? '2px solid #2a7d46' : '0')};
  border-left: ${p => (p.$active ? '1px solid #c4c4c4' : '0')};
  border-right: ${p => (p.$active ? '1px solid #c4c4c4' : '0')};
`;

const AddSheet = styled.div`
  margin: 5px 0 0 30px;
`;

const SplitDots = styled.div`
  width: 2px;
  height: 12px;
  margin: 7px 0 0 344px;
  background: repeating-linear-gradient(#c0c0c0 0 2px, transparent 2px 4px);
`;

const HScroll = styled.div`
  display: flex;
  align-items: center;
  width: 438px;
  height: 15px;
  margin: 6px 0 0 15px;
  background: #d8d8d8;
`;

const HBtn = styled.div`
  display: flex;
  align-items: center;
  justify-content: center;
  width: 13px;
  height: 15px;
  background: #fafafa;
  border: 1px solid #ccc;
`;

const HThumb = styled.div`
  width: 389px;
  height: 15px;
  background: #fff;
  border: 1px solid #ccc;
`;

const HGap = styled.div`
  flex: 1;
`;

const StatusBar = styled.div`
  display: flex;
  align-items: center;
  height: 21px;
  padding-left: 6px;
  background: #f5eff5;
  font-size: 10px;
  color: #666;
`;

const StatusInfo = styled.div`
  display: flex;
  gap: 15px;
  margin-left: auto;
  margin-right: 17px;
`;

const ViewBtn = styled.div`
  display: flex;
  align-items: center;
  justify-content: center;
  flex: none;
  width: ${p => p.$w}px;
  height: 21px;
  background: ${p => (p.$on ? '#c8c8c8' : 'transparent')};
`;

const ZoomBox = styled.div`
  display: flex;
  align-items: center;
  gap: 3px;
  margin-left: 7px;
`;

const ZoomMark = styled.span`
  font-size: 13px;
  font-weight: 700;
  color: #555;
`;

const ZoomTrack = styled.div`
  position: relative;
  width: 95px;
  height: 1px;
  background: #aaa;
`;

const ZoomThumb = styled.div`
  position: absolute;
  left: 46px;
  top: -6px;
  width: 3px;
  height: 13px;
  background: #666;
`;

const ZoomPct = styled.span`
  margin-left: 12px;
  padding-right: 9px;
`;

const Taskbar = styled.div`
  display: flex;
  align-items: center;
  flex: none;
  height: 36px;
  width: 1185px;
  background: #0a1722;
`;

const StartBtn = styled.div`
  display: flex;
  justify-content: center;
  width: 44px;
`;

const SearchBox = styled.div`
  display: flex;
  align-items: center;
  gap: 5px;
  width: 319px;
  height: 36px;
  padding: 0 13px 0 8px;
  background: #333;
`;

const SearchText = styled.span`
  font-size: 13.5px;
  color: #a8a8a8;
`;

const MicSlot = styled.span`
  margin-left: auto;
  padding-right: 2px;
`;

const TaskBtn = styled.div`
  display: flex;
  align-items: center;
  justify-content: center;
  width: ${p => p.$w}px;
  height: 36px;
  background: ${p => (p.$on ? '#3a4a46' : 'transparent')};
`;

const Tray = styled.div`
  display: flex;
  align-items: center;
  gap: 7px;
  margin-left: auto;
  padding-right: 20px;
  color: #e6e6e6;
`;

const TrayLang = styled.span`
  font-size: 11px;
  margin-left: 3px;
`;

const Clock = styled.div`
  display: flex;
  flex-direction: column;
  align-items: center;
  width: 60px;
  margin: 0 7px 0 1px;
  font-size: 10.5px;
  line-height: 15px;
`;
